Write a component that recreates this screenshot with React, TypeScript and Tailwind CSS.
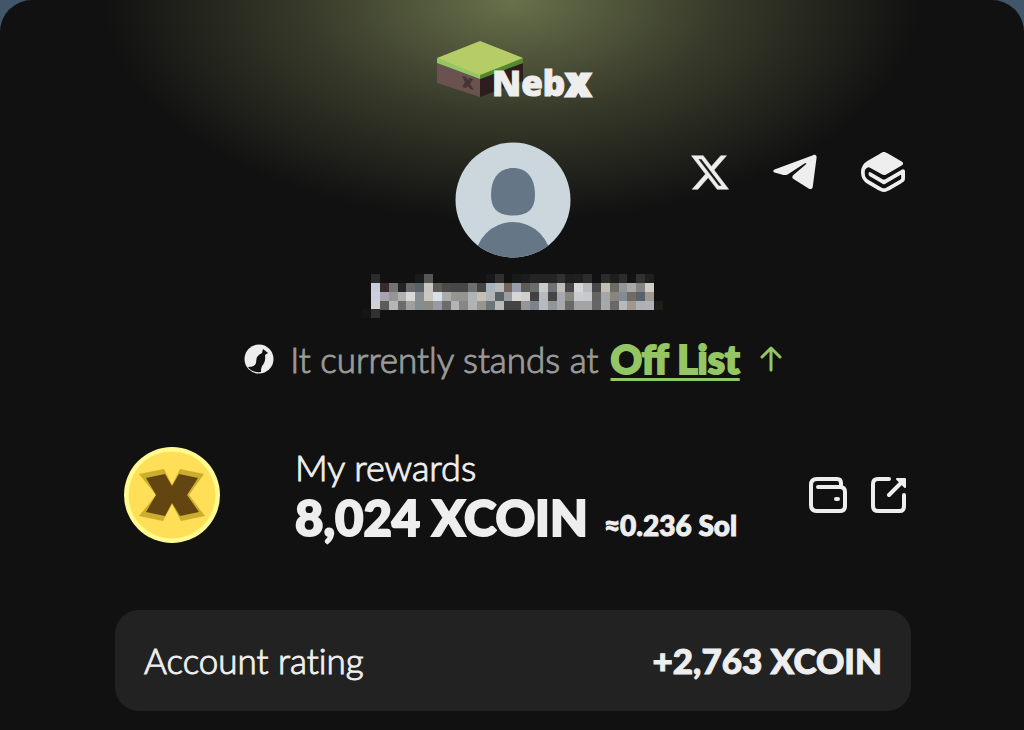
import React from "react";
import { SiGitbook } from "react-icons/si";

const light = "font-['Lato','Noto_Sans',sans-serif] font-light [-webkit-text-stroke:1px_currentColor] [font-variant-ligatures:no-common-ligatures]";
const black = "font-['Lato','Noto_Sans',sans-serif] font-black";

const mosaic: string[][] = [
  "2b2b2b 111111 111111 111111 111111 181a1b 575654 111111 111111 111111 111111 111111 111111 171819 303030 111111 17191a 1c1c1d 242424 242424 242424 313131 1e1e1e 202020 2c2c2c 111111 2b2b2b 1e1e1e 2c2c2c 131313 313131 1f1f1f".split(" "),
  "c8cdda 372b2d 737373 242424 66696b 58626a c9c7c2 5e5a56 4a4a4a 474747 474747 6f6f6f 454545 a9b3be b7b9ba 70645d 999eaa 5f5b55 6a6c6e c9cccf 707172 c3bcb8 464646 d7d7d7 b9bcbe 484848 c4beb4 6c6c66 92979a a8a8a6 858585 d3cdc7".split(" "),
  "c9cee0 a8a4ae 939695 b0b0b2 d8d8d7 888e91 cac8c2 d8e1e6 abadad 949490 949490 b1b4b7 c6c0b3 b2b5b7 586068 9b9ca2 d8d5d5 cfcfd0 424140 b7babd 444545 a6aab0 8a867f c9ccce c7c9cb 646464 a4a6aa 89857d 828b99 716c62 59616a a09993".split(" "),
  "cfd1d4 5b5b5b b5b5b5 6c6c6c a0a09f 868d90 8b8b82 989ba6 6c6c6c b5b4b2 86868a b0b2b5 96968d 6d747a b9bbbb 464442 464442 979696 7b838c b7bbbf 939699 a6a9ad 696867 a2a3a4 a2a3a4 666564 a6a8ab 696969 b9b9b8 a09890 adb2b6 b1b1b6".split(" "),
  ["313131"],
];

function Mosaic() {
  return (
    <svg role="img" aria-label="Hidden user name" viewBox="0 0 302 45" className="h-[45px] w-[302px]" shapeRendering="crispEdges">
      {mosaic.map((row, y) =>
        row.map((c, x) => (
          <rect key={`${x}-${y}`} x={9 + x * 8.84} y={y * 8.84} width={9} height={9} fill={`#${c}`} />
        ))
      )}
      <rect x={0} y={35.4} width={9} height={9} fill="#151515" />
      <rect x={292} y={26.5} width={9} height={9} fill="#1d1d18" />
    </svg>
  );
}

function Logo() {
  return (
    <svg role="img" aria-label="NebX" viewBox="-3 0 162 72" className="h-[72px] w-[162px]">
      <path d="M0 22 43 38v18L0 42z" fill="#695250" />
      <path d="M86 22 43 38v18l43-16z" fill="#2f1c1e" />
      <path d="M0 17v5l43 16v-6z" fill="#94c763" />
      <path d="M86 17v5L43 38v-6z" fill="#548a2f" />
      <path d="M43 0 86 17 43 34 0 17z" fill="#b6cc67" />
      <path d="m25 35 4 1 2 3 1-2 4 1-3 5 4 6-4-1-2-3-2 2-4-1 3-5z" fill="#443534" />
      <text x="55" y="55" fill="#eee" stroke="#eee" strokeWidth="1" fontSize="35" className="font-['Noto_Sans',sans-serif] font-black">
        Neb
        <tspan x="129" fontSize="39" strokeWidth="3">x</tspan>
      </text>
    </svg>
  );
}

function Avatar() {
  return (
    <svg role="img" aria-label="Profile picture" viewBox="0 0 116 116" className="size-[116px]">
      <clipPath id="avatar"><circle cx="58" cy="58" r="57.5" /></clipPath>
      <circle cx="58" cy="58" r="57.5" fill="#ccd6dd" />
      <g clipPath="url(#avatar)" fill="#657786">
        <path d="M58 26c14 0 22 10 22 27 0 14-7 20.500-22 20.500S36 67 36 53c0-17 8-27 22-27z" />
        <circle cx="58" cy="118" r="38" />
      </g>
    </svg>
  );
}

function Coin() {
  return (
    <svg aria-hidden="true" viewBox="0 0 96 96" className="size-24">
      <circle cx="48" cy="48" r="48" fill="#fffb91" />
      <circle cx="48" cy="48" r="43.500" fill="#ffdf57" />
      <path d="m15 27 25-5 8 16 8-16 24 5-15 21 16 21-24 5-9-17-9 17-24-5 17-21z" fill="#ccad2d" />
      <path d="m22 31 19-4 7 12 7-12 19 4-11 17 12 17-19 4-8-13-7 13-19-4 10-17z" fill="#624510" />
    </svg>
  );
}

export default function App() {
  return (
    <div className="min-h-screen bg-[#42566a]">
      <main className="flex min-h-screen flex-col items-center rounded-t-[32px] bg-[#111] bg-[radial-gradient(ellipse_408px_222px_at_50%_0,#69714b,#383b2a_50%,#111)] pt-[41px] pr-8 pb-5 pl-[34px] text-[#eee]">
        <h1 className="pl-1"><Logo /></h1>

        <div className="mt-[29px] grid w-full max-w-[796px] grid-cols-[1fr_auto_1fr] items-start">
          <div className="col-start-2"><Avatar /></div>
          <nav aria-label="Social links" className="flex items-center justify-end gap-11 pt-2 pr-[6px]">
            <a href="#x" aria-label="X">
              <svg viewBox="1 2 22 20" className="h-[35px] w-[38px]" fill="#eee" stroke="#eee" strokeWidth=".3">
                <path d="M18.244 2.25h3.308l-7.227 8.26 8.502 11.24H16.17l-5.214-6.817L4.99 21.75H1.68l7.73-8.835L1.254 2.25H8.08l4.713 6.231zm-1.161 17.52h1.833L7.084 4.126H5.117z" />
              </svg>
            </a>
            <a href="#telegram" aria-label="Telegram">
              <svg viewBox="0 0 44 36" className="h-9 w-11" fill="#eee">
                <path d="M1.500 15.500 40 1.200c2.500-1 3.800.3 3.600 2.400L39.800 32.500c-.4 2.700-2.200 3.200-4.200 1.900L20.500 25c-1.600-1-1.500-2.600-.1-3.900L33 10.200c1-.9-.2-1.500-1.500-.7L15 20.300c-1.500.9-2.900 1-4.600.6L1.600 18.400c-1.800-.6-1.800-2.200-.1-2.900z" />
              </svg>
            </a>
            <a href="#docs" aria-label="Docs">
              <SiGitbook className="size-11 text-[#eee]" />
            </a>
          </nav>
        </div>

        <div className="mt-4"><Mosaic /></div>

        <p className="mt-4 flex h-12 items-center gap-3">
          <svg aria-hidden="true" viewBox="0 0 30 30" className="mr-1 size-[30px]">
            <circle cx="15" cy="15" r="14.500" fill="#eee" />
            <path d="m19 5 5 4-3 2q1 7-3 11-1 2-1 6-9 1-13-5 7 0 8-4 0-8 6-10z" fill="#111" />
          </svg>
          <span className={`${light} text-[35px] text-[#999]`}>It currently stands at</span>
          <a href="#list" className={`${black} text-[39px] text-[#94c763] underline decoration-3 underline-offset-4 [-webkit-text-stroke:2px_currentColor]`}>Off List</a>
          <svg aria-hidden="true" viewBox="0 0 22 26" className="ml-2 h-[26px] w-[22px]" fill="none" stroke="#94c763" strokeWidth="3" strokeLinecap="round" strokeLinejoin="round">
            <path d="M11 24V3M2 11l9-9 9 9" />
          </svg>
        </p>

        <section aria-label="My rewards" className="mt-16 flex h-24 w-full max-w-[796px] items-center pr-1 pl-[9px]">
          <Coin />
          <div className="ml-[75px] grow pt-3">
            <h2 className={`${light} text-[36px] leading-10`}>My rewards</h2>
            <p className={`${black} flex items-baseline gap-4 leading-[60px]`}>
              <span className="text-[49px] [-webkit-text-stroke:2px_currentColor]">8,024 XCOIN</span>
              <span className="text-[28px] [-webkit-text-stroke:1px_currentColor]">≈0.236 Sol</span>
            </p>
          </div>
          <div className="flex gap-6">
            <button type="button" aria-label="Wallet">
              <svg viewBox="0 0 38 36" className="h-9 w-[38px]" fill="none" stroke="#eee" strokeWidth="4" strokeLinecap="round" strokeLinejoin="round">
                <path d="M9 10h22q5 0 5 5v14q0 5-5 5H8q-6 0-6-6V8q0-6 6-6h20q4 0 4 4v4M27 22h2" />
              </svg>
            </button>
            <button type="button" aria-label="Open">
              <svg viewBox="0 0 36 36" className="size-9" fill="none" stroke="#eee" strokeWidth="4" strokeLinecap="round" strokeLinejoin="round">
                <path d="M18 2H7Q2 2 2 7v22q0 5 5 5h22q4 0 4-5V18M18 18 32 4" />
                <path d="M26 2h8v8z" fill="#eee" strokeWidth="2" />
              </svg>
            </button>
          </div>
        </section>

        <section className="mt-[67px] flex h-[101px] w-full max-w-[796px] items-center justify-between rounded-3xl bg-[#222] px-[29px]">
          <h2 className={`${light} text-[35px]`}>Account rating</h2>
          <p className={`${black} text-[35px] [-webkit-text-stroke:1px_currentColor]`}>+2,763 XCOIN</p>
        </section>
      </main>
    </div>
  );
}
